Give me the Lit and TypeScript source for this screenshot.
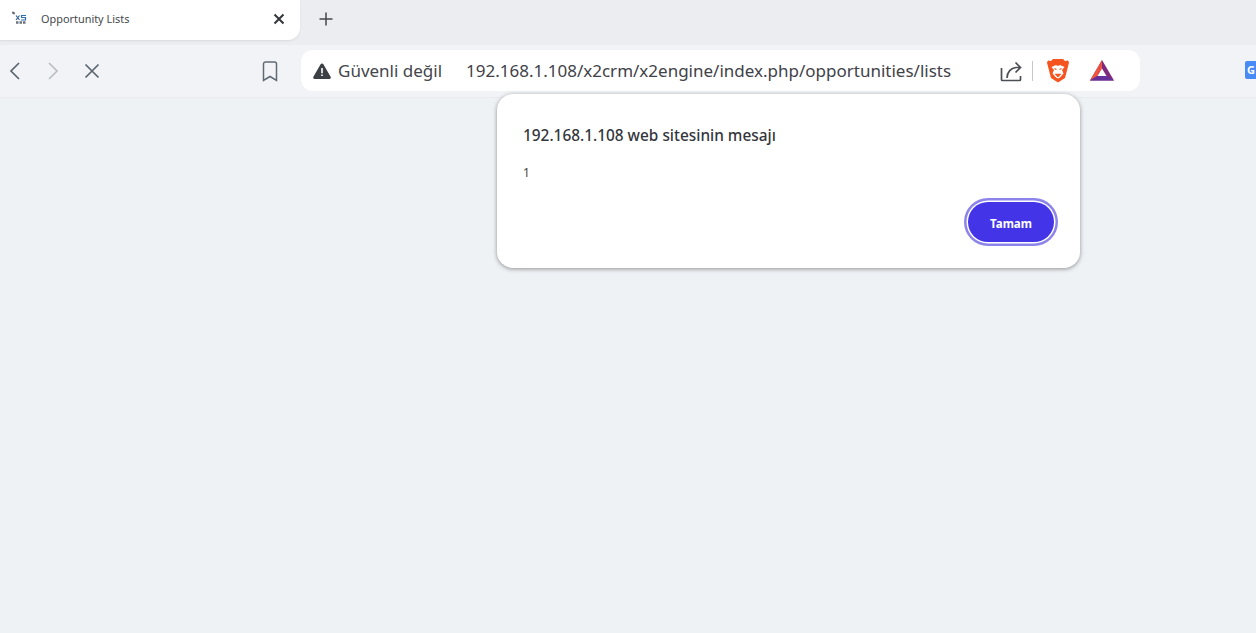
import { LitElement, html, css } from 'lit';
import { customElement } from 'lit/decorators.js';

@customElement('app-root')
export class AppRoot extends LitElement {
  static styles = css`
    :host {
      display: block;
      position: relative;
      width: 1256px;
      height: 633px;
      overflow: hidden;
      background: #eff2f5;
      font-family: 'Noto Sans', 'Open Sans', sans-serif;
      color: #3c3f44;
    }

    svg {
      display: block;
      flex: none;
    }

    /* Tab strip */
    .strip {
      display: flex;
      height: 45px;
      background: #ebedf0;
    }

    .tab {
      display: flex;
      align-items: center;
      width: 300px;
      height: 40px;
      box-sizing: border-box;
      padding: 0 14px 3px 10px;
      background: #fff;
      border-radius: 0 0 12px 0;
      box-shadow: 0 1px 2px rgba(0, 0, 0, 0.08);
    }

    .tab-title {
      flex: 1;
      margin-left: 13px;
      font-size: 10.9px;
      color: #45484d;
    }

    .new-tab {
      margin: 11px 0 0 18px;
    }

    /* Toolbar */
    .toolbar {
      display: flex;
      align-items: center;
      height: 53px;
      box-sizing: border-box;
      padding: 0 0 0 8px;
      background: #f2f3f6;
      border-bottom: 1px solid #e9ebee;
    }

    .nav {
      display: flex;
      flex: none;
      align-items: center;
      gap: 24px;
      width: 293px;
    }

    .bookmark {
      margin-left: 138px;
    }

    .address {
      display: flex;
      flex: none;
      align-items: center;
      width: 839px;
      height: 41px;
      box-sizing: border-box;
      margin-bottom: 1px;
      padding: 0 0 0 12px;
      background: #fff;
      border-radius: 12px;
      font-size: 17px;
    }

    .warning {
      margin-left: 7px;
      width: 128px;
      white-space: nowrap;
      color: #43464c;
    }

    .url {
      width: 533px;
      white-space: nowrap;
      color: #3f4248;
    }

    .divider {
      width: 1px;
      height: 20px;
      margin: 0 14px 0 9px;
      background: #c4c7cb;
    }

    .bat {
      margin-left: 21px;
    }

    .translate {
      flex: none;
      display: flex;
      align-items: center;
      width: 18px;
      height: 18px;
      box-sizing: border-box;
      margin: 0 0 3px 105px;
      padding-left: 2px;
      background: #4a8af4;
      border-radius: 2px;
      color: #fff;
      font-size: 11px;
      font-weight: 700;
    }

    /* Alert dialog */
    .dialog {
      position: absolute;
      left: 497px;
      top: 94px;
      width: 583px;
      height: 174px;
      box-sizing: border-box;
      display: flex;
      flex-direction: column;
      padding: 31px 26px 26px 26px;
      background: #fff;
      border-radius: 16px;
      box-shadow: 0 1px 4px rgba(60, 64, 67, 0.55);
    }

    .dialog h1 {
      margin: 0;
      font-size: 15.4px;
      line-height: 22px;
      font-weight: 500;
      color: #33363b;
    }

    .dialog p {
      margin: 18px 0 0;
      font-size: 12px;
      line-height: 16px;
      color: #4a4538;
    }

    .actions {
      display: flex;
      justify-content: flex-end;
      margin-top: auto;
    }

    .ok {
      width: 86px;
      height: 40px;
      padding: 2px 0 0;
      border: none;
      border-radius: 20px;
      background: #4334e8;
      box-shadow: 0 0 0 1.5px #fff, 0 0 0 4px #8c84ea;
      color: #fff;
      font-family: inherit;
      font-size: 11.5px;
      font-weight: 700;
    }
  `;

  render() {
    return html`
      <div class="strip">
        <div class="tab">
          <svg width="18" height="18" viewBox="0 0 18 18">
            <rect x="2" y="2" width="3" height="2" fill="#5f666f" transform="rotate(35 3.5 3)" />
            <path d="M6 5.500l3.500 4.500M9.500 5.500L6 10" stroke="#2f5f92" stroke-width="1.200" fill="none" />
            <path d="M16 5.500h-4.500v2h4v2.500H11" stroke="#2f6ea8" stroke-width="1.200" fill="none" />
            <path d="M6 12.500h10" stroke="#6a727b" stroke-width="2.500" stroke-dasharray="2.500 1" />
          </svg>
          <span class="tab-title">Opportunity Lists</span>
          <svg width="14" height="14" viewBox="0 0 14 14">
            <path d="M2.500 2.500l9 9M11.500 2.500l-9 9" stroke="#33363b" stroke-width="2" fill="none" />
          </svg>
        </div>
        <svg class="new-tab" width="16" height="16" viewBox="0 0 16 16">
          <path d="M8 1.500v13M1.500 8h13" stroke="#44474c" stroke-width="1.500" fill="none" />
        </svg>
      </div>

      <div class="toolbar">
        <div class="nav">
          <svg width="14" height="20" viewBox="0 0 14 20">
            <path d="M11 2L3 10l8 8" stroke="#5b6670" stroke-width="1.700" fill="none" />
          </svg>
          <svg width="14" height="20" viewBox="0 0 14 20">
            <path d="M3 2l8 8-8 8" stroke="#b9bec3" stroke-width="1.700" fill="none" />
          </svg>
          <svg width="16" height="16" viewBox="0 0 16 16">
            <path d="M1.500 1.500l13 13M14.500 1.500l-13 13" stroke="#5b6670" stroke-width="1.700" fill="none" />
          </svg>
          <svg class="bookmark" width="16" height="21" viewBox="0 0 16 21">
            <path d="M1.500 3a2 2 0 0 1 2-2h9a2 2 0 0 1 2 2v16.500l-6.500-4-6.500 4z" stroke="#5f6a74" stroke-width="1.500" fill="none" />
          </svg>
        </div>

        <div class="address">
          <svg width="18" height="16" viewBox="0 0 18 16">
            <path d="M9 .5a1.600 1.600 0 0 1 1.400.8l7.200 12.400a1.500 1.500 0 0 1-1.300 2.300H1.700a1.500 1.500 0 0 1-1.300-2.300L7.600 1.300A1.600 1.600 0 0 1 9 .5z" fill="#3c3f43" />
            <path d="M8.200 5h1.600v5.200H8.200zM8.200 11.400h1.600V13H8.200z" fill="#fff" />
          </svg>
          <span class="warning">Güvenli değil</span>
          <span class="url">192.168.1.108/x2crm/x2engine/index.php/opportunities/lists</span>
          <svg width="24" height="22" viewBox="0 0 24 22">
            <path d="M2.500 8v11.500a1 1 0 0 0 1 1h17a1 1 0 0 0 1-1V16" stroke="#4b4f54" stroke-width="1.700" fill="none" />
            <path d="M8 18c.2-6 4-10 9-10.500h4.500M16.500 2.500l5 5-5 5" stroke="#4b4f54" stroke-width="1.700" fill="none" />
          </svg>
          <span class="divider"></span>
          <svg width="22" height="25" viewBox="0 0 22 25">
            <path d="M6 1h10l2 2 3-.5 1 2-1.500 6L18 20l-7 4.500L4 20 1.500 10.500 0 4.500l1-2 3 .5z" fill="#f6541f" />
            <path d="M4.500 9l4.500-2 2 1 2-1 4.500 2-2.500 3 1.500 3.500-3.500 4-2 1-2-1-3.500-4L7 12z" fill="#fff" />
            <path d="M7.500 10.500l2 1M14.500 10.500l-2 1M9 16.500h4l-2 2z" stroke="#f6541f" stroke-width="1.300" fill="#f6541f" />
          </svg>
          <svg class="bat" width="24" height="21" viewBox="0 0 24 21">
            <path d="M12 0L0 20.500h24z" fill="#7f2a7c" />
            <path d="M12 0L0 20.500l7.500-4.500z" fill="#f2543c" />
            <path d="M12 0l-4.500 16 4.500-7.500z" fill="#f2543c" />
            <path d="M12 8.500l-4.500 7.500h9z" fill="#fff" />
            <path d="M0 20.500l7-4.500h10l7 4.500z" fill="#66309a" />
          </svg>
        </div>
        <span class="translate">G</span>
      </div>

      <div class="dialog" role="alertdialog">
        <h1>192.168.1.108 web sitesinin mesajı</h1>
        <p>1</p>
        <div class="actions">
          <button class="ok">Tamam</button>
        </div>
      </div>
    `;
  }
}
